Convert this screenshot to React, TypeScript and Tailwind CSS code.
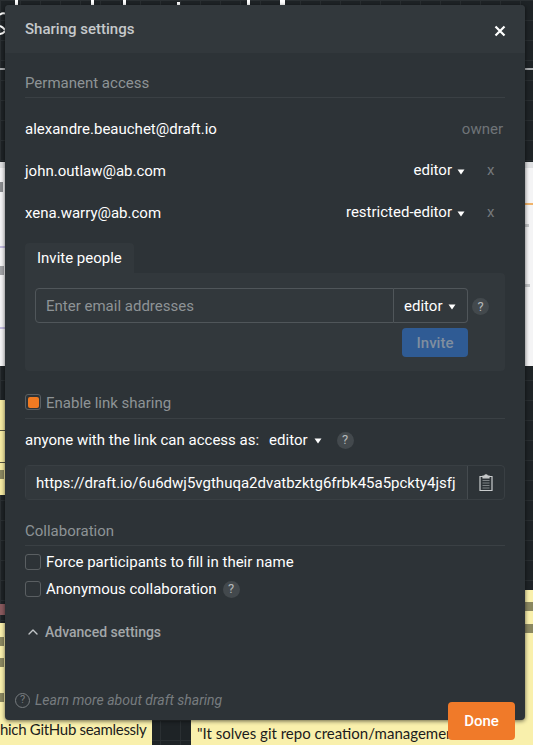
import { ChevronUp } from 'lucide-react';

const font = { fontFamily: 'Roboto, sans-serif' };

const people = [
  { email: 'john.outlaw@ab.com', role: 'editor' },
  { email: 'xena.warry@ab.com', role: 'restricted-editor' },
];

function Caret() {
  return (
    <svg width="8" height="6" viewBox="0 0 8 6" className="shrink-0">
      <path d="M0.5 0.5h7L4 5.5z" fill="currentColor" />
    </svg>
  );
}

function Help() {
  return (
    <span className="flex size-[17px] shrink-0 items-center justify-center rounded-full bg-[#43494d] text-[13px] text-[#b4b8ba]">
      ?
    </span>
  );
}

function Backdrop() {
  return (
    <div className="absolute inset-0 overflow-hidden bg-[#1e2326] bg-[linear-gradient(#2a2f32_1px,transparent_1px),linear-gradient(90deg,#2a2f32_1px,transparent_1px)] bg-[size:20px_20px] font-[Lato,sans-serif] text-[15px] text-[#1c1c1c]">
      <div className="absolute top-0 left-[15px] h-[5px] w-[3px] bg-white" />
      <div className="absolute top-0 left-[91px] h-[5px] w-[3px] bg-white" />
      <div className="absolute top-0 left-[123px] h-[5px] w-[3px] bg-white" />
      <div className="absolute top-[2px] left-[177px] h-[3px] w-[3px] bg-white" />
      <div className="absolute top-0 left-[247px] h-[5px] w-[3px] bg-white" />
      <div className="absolute top-0 left-[280px] h-[5px] w-[5px] bg-white" />
      <svg width="5" height="24" viewBox="0 0 5 24" fill="none" stroke="#fff" strokeWidth="2" className="absolute top-[12px] left-0">
        <path d="M5 1.5C3 1 1 1.5 0 3M0 14c2 1 4 2 5 4M5 19c-1 2-3 3-5 3" />
      </svg>
      <div className="absolute top-[68px] left-0 h-[2px] w-[5px] bg-[#a8abad]" />
      <div className="absolute top-[68px] left-[525px] h-[2px] w-[8px] bg-[#a8abad]" />

      <div className="absolute top-[162px] left-0 h-[204px] w-full bg-[#f4f4f5]">
        <div className="absolute top-0 left-0 h-[6px] w-full bg-[#dfe0e2]" />
        <div className="absolute top-[41px] left-[525px] h-[2px] w-[8px] bg-[#f0b36a]" />
        <div className="absolute top-[20px] left-0 h-[10px] w-[3px] bg-[#8a8c8f]" />
        <div className="absolute top-[84px] left-0 h-[2px] w-[5px] bg-[#c4bde0]" />
        <div className="absolute top-[104px] left-0 h-[9px] w-[4px] bg-[#a0a2a5]" />
        <div className="absolute top-[165px] left-0 h-[2px] w-[5px] bg-[#c4bde0]" />
        <div className="absolute top-[62px] left-[525px] h-[3px] w-[4px] bg-[#c3c5c7]" />
        <div className="absolute top-[122px] left-[525px] h-[3px] w-[5px] bg-[#c3c5c7]" />
      </div>

      <div className="absolute top-[400px] left-0 h-[95px] w-[152px] bg-[#f6eba3]">
        <div className="absolute top-[30px] left-0 h-px w-full bg-[#55533f]" />
        <div className="absolute top-[62px] left-0 h-px w-full bg-[#55533f]" />
        <div className="absolute top-[70px] left-0 h-[9px] w-[4px] bg-[#8a8760]" />
      </div>

      <div className="absolute top-[604px] left-0 h-[11px] w-[5px] bg-[#8a5a5e]" />

      <div className="absolute top-[623px] left-0 h-[122px] w-[152px] bg-[#f9f0ac]">
        <div className="absolute top-[14px] left-0 h-[9px] w-[4px] bg-[#8a8760]" />
        <div className="absolute top-[35px] left-0 h-[9px] w-[4px] bg-[#8a8760]" />
        <div className="absolute top-[70px] left-0 h-[9px] w-[4px] bg-[#8a8760]" />
        <span className="absolute top-[96px] left-0 tracking-[-0.3px] whitespace-nowrap leading-5">
          hich GitHub seamlessly
        </span>
      </div>
      <div className="absolute top-[590px] left-[191px] h-[155px] w-[342px] bg-[#f9f0ac]">
        <div className="absolute top-[12px] left-[334px] h-[9px] w-[8px] bg-[#8a8760]" />
        <div className="absolute top-[34px] left-[334px] h-[9px] w-[8px] bg-[#8a8760]" />
        <span className="absolute top-[133px] left-[6px] whitespace-nowrap leading-5">
          "It solves git repo creation/management tools
        </span>
      </div>
    </div>
  );
}

function Dialog() {
  return (
    <div
      style={font}
      className="absolute top-[5px] left-[5px] flex h-[715px] w-[520px] flex-col overflow-hidden rounded-[4px] bg-[#2d3337] text-[15px] text-white shadow-[0_1px_4px_rgba(0,0,0,0.6)]"
    >
      <div className="flex h-12 shrink-0 items-center justify-between bg-[#32383c] pr-[19px] pl-5">
        <span className="font-medium text-[#c6c9cb]">Sharing settings</span>
        <svg width="12" height="12" viewBox="0 0 12 12" className="mt-[4px] text-white">
          <path d="M1.5 1.5l9 9M10.5 1.5l-9 9" stroke="currentColor" strokeWidth="2.2" />
        </svg>
      </div>

      <div className="flex flex-1 flex-col px-5">
        <div className="mt-5 h-[25px] border-b border-[#3a4044] leading-5 text-[#8e9396]">Permanent access</div>

        <div className="mt-[10px] flex h-[42px] items-center justify-between">
          <span>alexandre.beauchet@draft.io</span>
          <span className="pr-[2px] text-[#6f7477]">owner</span>
        </div>
        {people.map((person) => (
          <div key={person.email} className="flex h-[42px] items-center justify-between">
            <span>{person.email}</span>
            <span className="flex items-center">
              <span className="mb-[2px]">{person.role}</span>
              <span className="mt-[2px] ml-[5px]">
                <Caret />
              </span>
              <span className="ml-[22px] w-[18px] pb-[2px] text-[#75797c]">x</span>
            </span>
          </div>
        ))}

        <div className="mt-[9px] flex h-[30px] w-[109px] items-center rounded-t-[4px] bg-[#32383c] pl-3">
          Invite people
        </div>
        <div className="flex h-[98px] flex-col rounded-b-[4px] rounded-tr-[4px] bg-[#32383c] pt-[15px] pr-[37px] pl-[10px]">
          <div className="relative flex h-[35px]">
            <div className="flex flex-1 items-center rounded-l-[4px] border border-[#50565a] px-[10px] pt-[1px] text-[#8e9396]">
              Enter email addresses
            </div>
            <div className="flex w-[74px] items-center rounded-r-[4px] border border-l-0 border-[#50565a] pt-[1px] pl-[10px]">
              editor
              <span className="mt-[2px] ml-[6px]">
                <Caret />
              </span>
            </div>
            <span className="absolute top-[10px] right-[-21px]">
              <Help />
            </span>
          </div>
          <div className="mt-[5px] flex justify-end">
            <div className="flex h-[29px] w-[66px] items-center justify-center rounded-[4px] bg-[#2f5b94] pt-[1px] font-medium text-[#7f8e9f]">
              Invite
            </div>
          </div>
        </div>

        <div className="mt-[23px] flex h-[25px] items-start gap-[5px] border-b border-[#3a4044]">
          <span className="flex size-4 items-center justify-center rounded-[3px] border border-[#5a5f62]">
            <span className="size-[11px] rounded-[2px] bg-[#f07a22]" />
          </span>
          <span className="mt-[-1px] leading-5 text-[#8e9396]">Enable link sharing</span>
        </div>

        <div className="mt-[11px] flex h-5 items-center">
          <span>anyone with the link can access as:</span>
          <span className="ml-[10px]">editor</span>
          <span className="mt-[2px] ml-[6px]">
            <Caret />
          </span>
          <span className="ml-[15px]">
            <Help />
          </span>
        </div>

        <div className="mt-[15px] flex h-[35px] rounded-[4px] border border-[#393f43]">
          <div className="flex flex-1 items-center overflow-hidden bg-[#32383c] pt-[1px] pl-[10px] whitespace-nowrap">
            https://draft.io/6u6dwj5vgthuqa2dvatbzktg6frbk45a5pckty4jsfj
          </div>
          <div className="flex w-[37px] shrink-0 items-center justify-center border-l border-[#454b4f]">
            <svg width="14" height="17" viewBox="0 0 14 17" fill="none" stroke="#c9cccd" strokeWidth="1.2">
              <path d="M4 2.5H1v14h12v-14h-3" />
              <path d="M4 3.8V2.2h1.6a1.4 1.4 0 0 1 2.8 0H10v1.6z" fill="#c9cccd" />
              <path d="M3.5 6.5h7M3.5 9h7M3.5 11.5h7M3.5 14h7" stroke="#7c8184" />
            </svg>
          </div>
        </div>

        <div className="mt-[21px] h-[25px] border-b border-[#3a4044] leading-5 text-[#8e9396]">Collaboration</div>

        <label className="mt-[8px] flex h-4 items-center gap-[5px]">
          <span className="size-4 rounded-[3px] border border-[#5a5f62]" />
          Force participants to fill in their name
        </label>
        <label className="mt-[11px] flex h-4 items-center gap-[5px]">
          <span className="size-4 rounded-[3px] border border-[#5a5f62]" />
          Anonymous collaboration
          <span className="ml-[1px]">
            <Help />
          </span>
        </label>

        <div className="mt-[25px] flex h-5 items-center gap-[4px] text-[14px] font-medium text-[#a3a7a9]">
          <ChevronUp size={16} strokeWidth={2} className="text-[#c2c5c7]" />
          Advanced settings
        </div>

        <div className="mt-auto mb-[10px] ml-[-10px] flex h-5 items-center gap-[5px] text-[14px] text-[#777c7f] italic">
          <span className="flex size-[15px] items-center justify-center rounded-full border border-[#777c7f] text-[11px] not-italic">
            ?
          </span>
          Learn more about draft sharing
        </div>
      </div>
    </div>
  );
}

export default function App() {
  return (
    <div className="relative h-[745px] w-[533px] overflow-hidden">
      <Backdrop />
      <Dialog />
      <button
        style={font}
        className="absolute top-[702px] left-[448px] h-[38px] w-[67px] rounded-[4px] bg-[#f07a29] text-[15px] font-medium text-white"
      >
        Done
      </button>
    </div>
  );
}
